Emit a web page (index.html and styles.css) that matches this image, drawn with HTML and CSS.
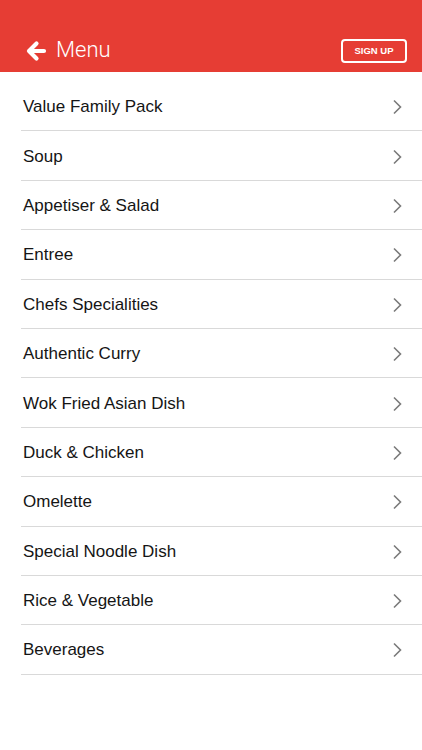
FILE: index.html
```
<!DOCTYPE html>
<html>
<head>
<meta charset="utf-8">
<link rel="stylesheet" href="styles.css">
</head>
<body>
<header class="topbar">
  <div class="title">
    <svg class="back" viewBox="0 0 22 22" width="22" height="22"><path d="M4 11 H19 M11.5 3.5 L4 11 L11.5 18.5" fill="none" stroke="#fff" stroke-width="4.2" stroke-linecap="round" stroke-linejoin="round"/></svg>
    <span class="title-text">Menu</span>
  </div>
  <button class="signup">SIGN UP</button>
</header>
<ul class="menu">
  <li class="row"><span>Value Family Pack</span><svg class="chev" viewBox="0 0 10 16" width="10" height="16"><path d="M2 1.5 L8.5 8 L2 14.5" fill="none" stroke="#7a7a7a" stroke-width="1.6"/></svg></li>
  <li class="row"><span>Soup</span><svg class="chev" viewBox="0 0 10 16" width="10" height="16"><path d="M2 1.5 L8.5 8 L2 14.5" fill="none" stroke="#7a7a7a" stroke-width="1.6"/></svg></li>
  <li class="row"><span>Appetiser &amp; Salad</span><svg class="chev" viewBox="0 0 10 16" width="10" height="16"><path d="M2 1.5 L8.5 8 L2 14.5" fill="none" stroke="#7a7a7a" stroke-width="1.6"/></svg></li>
  <li class="row"><span>Entree</span><svg class="chev" viewBox="0 0 10 16" width="10" height="16"><path d="M2 1.5 L8.5 8 L2 14.5" fill="none" stroke="#7a7a7a" stroke-width="1.6"/></svg></li>
  <li class="row"><span>Chefs Specialities</span><svg class="chev" viewBox="0 0 10 16" width="10" height="16"><path d="M2 1.5 L8.5 8 L2 14.5" fill="none" stroke="#7a7a7a" stroke-width="1.6"/></svg></li>
  <li class="row"><span>Authentic Curry</span><svg class="chev" viewBox="0 0 10 16" width="10" height="16"><path d="M2 1.5 L8.5 8 L2 14.5" fill="none" stroke="#7a7a7a" stroke-width="1.6"/></svg></li>
  <li class="row"><span>Wok Fried Asian Dish</span><svg class="chev" viewBox="0 0 10 16" width="10" height="16"><path d="M2 1.5 L8.5 8 L2 14.5" fill="none" stroke="#7a7a7a" stroke-width="1.6"/></svg></li>
  <li class="row"><span>Duck &amp; Chicken</span><svg class="chev" viewBox="0 0 10 16" width="10" height="16"><path d="M2 1.5 L8.5 8 L2 14.5" fill="none" stroke="#7a7a7a" stroke-width="1.6"/></svg></li>
  <li class="row"><span>Omelette</span><svg class="chev" viewBox="0 0 10 16" width="10" height="16"><path d="M2 1.5 L8.5 8 L2 14.5" fill="none" stroke="#7a7a7a" stroke-width="1.6"/></svg></li>
  <li class="row"><span>Special Noodle Dish</span><svg class="chev" viewBox="0 0 10 16" width="10" height="16"><path d="M2 1.5 L8.5 8 L2 14.5" fill="none" stroke="#7a7a7a" stroke-width="1.6"/></svg></li>
  <li class="row"><span>Rice &amp; Vegetable</span><svg class="chev" viewBox="0 0 10 16" width="10" height="16"><path d="M2 1.5 L8.5 8 L2 14.5" fill="none" stroke="#7a7a7a" stroke-width="1.6"/></svg></li>
  <li class="row"><span>Beverages</span><svg class="chev" viewBox="0 0 10 16" width="10" height="16"><path d="M2 1.5 L8.5 8 L2 14.5" fill="none" stroke="#7a7a7a" stroke-width="1.6"/></svg></li>
</ul>
</body>
</html>
```
FILE: styles.css
```
html, body {
  margin: 0;
  padding: 0;
  background: #ffffff;
}
body {
  font-family: "Liberation Sans", Arial, sans-serif;
  width: 422px;
  height: 750px;
  overflow: hidden;
}
.topbar {
  box-sizing: border-box;
  height: 72px;
  padding: 30px 15px 0 25px;
  background: #e63d34;
  display: flex;
  align-items: center;
  justify-content: space-between;
}
.title {
  display: flex;
  align-items: center;
  gap: 9px;
}
.back {
  display: block;
}
.title-text {
  font-family: Roboto, "Liberation Sans", sans-serif;
  font-weight: 300;
  font-size: 22px;
  color: #ffffff;
  line-height: 1;
  position: relative;
  top: -1px;
}
.signup {
  box-sizing: border-box;
  width: 66px;
  height: 24px;
  border: 2px solid #ffffff;
  border-radius: 4px;
  background: transparent;
  color: #ffffff;
  font-family: "Liberation Sans", Arial, sans-serif;
  font-weight: bold;
  font-size: 9.5px;
  padding: 0;
  margin-top: -1px;
}
.menu {
  list-style: none;
  margin: 10px 0 0 21px;
  padding: 0;
}
.row {
  box-sizing: border-box;
  height: 49.4px;
  border-bottom: 1px solid #d9d9d9;
  display: flex;
  align-items: center;
  justify-content: space-between;
  padding: 2px 20px 0 2px;
  font-size: 17px;
  color: #151515;
}
.chev {
  display: block;
}
```
